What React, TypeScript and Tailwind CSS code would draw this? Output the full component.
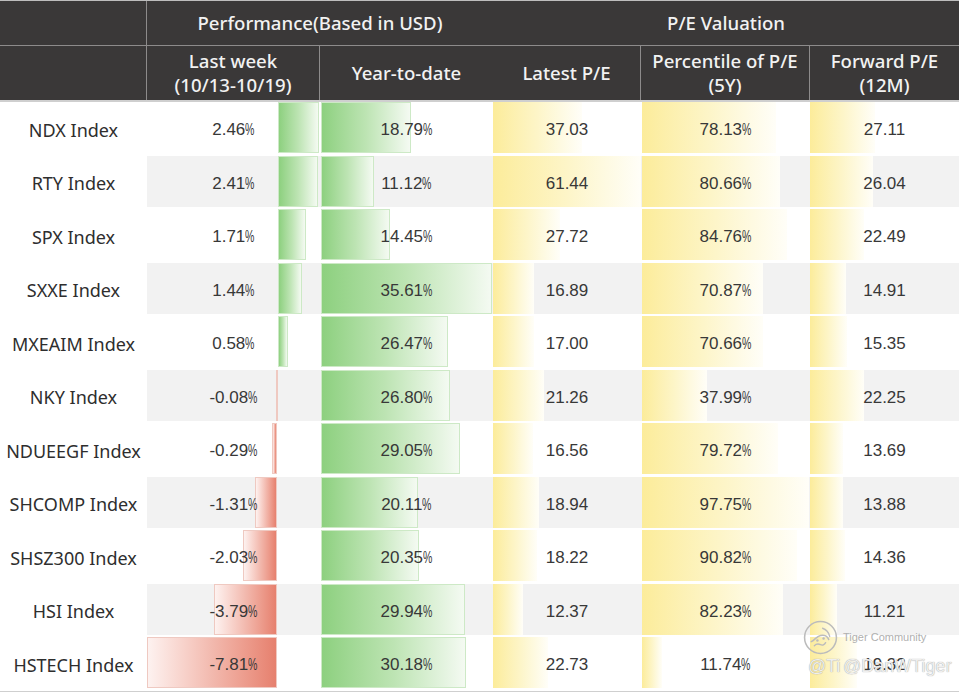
import React from 'react';

interface Row {
  name: string;
  lw: number;
  ytd: number;
  pe: number;
  pct: number;
  fwd: number;
}

const rows: Row[] = [
  { name: 'NDX Index', lw: 2.46, ytd: 18.79, pe: 37.03, pct: 78.13, fwd: 27.11 },
  { name: 'RTY Index', lw: 2.41, ytd: 11.12, pe: 61.44, pct: 80.66, fwd: 26.04 },
  { name: 'SPX Index', lw: 1.71, ytd: 14.45, pe: 27.72, pct: 84.76, fwd: 22.49 },
  { name: 'SXXE Index', lw: 1.44, ytd: 35.61, pe: 16.89, pct: 70.87, fwd: 14.91 },
  { name: 'MXEAIM Index', lw: 0.58, ytd: 26.47, pe: 17.0, pct: 70.66, fwd: 15.35 },
  { name: 'NKY Index', lw: -0.08, ytd: 26.8, pe: 21.26, pct: 37.99, fwd: 22.25 },
  { name: 'NDUEEGF Index', lw: -0.29, ytd: 29.05, pe: 16.56, pct: 79.72, fwd: 13.69 },
  { name: 'SHCOMP Index', lw: -1.31, ytd: 20.11, pe: 18.94, pct: 97.75, fwd: 13.88 },
  { name: 'SHSZ300 Index', lw: -2.03, ytd: 20.35, pe: 18.22, pct: 90.82, fwd: 14.36 },
  { name: 'HSI Index', lw: -3.79, ytd: 29.94, pe: 12.37, pct: 82.23, fwd: 11.21 },
  { name: 'HSTECH Index', lw: -7.81, ytd: 30.18, pe: 22.73, pct: 11.74, fwd: 19.32 },
];

// px per unit, read off the bars in the sheet
const LW_AXIS = 130;
const LW_SCALE = 16.6;
const YTD_SCALE = 4.8;
const PE_SCALE = 2.41;
const PCT_SCALE = 1.71;

const Pct = () => (
  <span className="inline-block origin-left scale-x-[0.62] -mr-[5.7px]">%</span>
);

const Num: React.FC<{ v: string; pct?: boolean }> = ({ v, pct }) => (
  <span className="relative pt-[5px] font-['Liberation_Sans',sans-serif] text-[17px] text-[#383838]">
    {v}
    {pct && <Pct />}
  </span>
);

type BarKind = 'green' | 'red' | 'yellow';

const barClass: Record<BarKind, string> = {
  green: 'bg-linear-to-r from-[#8dd07f] via-[#bde4b3] to-[#f4faf2] border border-[#cde9c6]',
  red: 'bg-linear-to-l from-[#e6806e] via-[#f2b9ae] to-[#fdf2f0] border border-[#efc9c1]',
  yellow: 'bg-linear-to-r from-[#fcec9a] via-[#fdf5c8] to-[#fffef8]',
};

const Cell: React.FC<{
  width: string;
  gray: boolean;
  left: number;
  barWidth: number;
  kind: BarKind;
  children: React.ReactNode;
}> = ({ width, gray, left, barWidth, kind, children }) => (
  <div
    className={`relative flex h-full items-center justify-center ${width} ${
      gray ? 'bg-[#f2f2f2]' : 'bg-white'
    }`}
  >
    <div
      className={`absolute top-0 bottom-0 ${barClass[kind]}`}
      style={{ left, width: Math.max(barWidth, 1) }}
    />
    {children}
  </div>
);

const TigerMark = () => (
  <div className="pointer-events-none absolute left-[802px] top-[619px] flex flex-col">
    <div className="flex items-center gap-[4px]">
      <svg width="37" height="37" viewBox="0 0 36 36" fill="none">
        <circle cx="18" cy="18" r="15.5" stroke="#bcbcbc" strokeWidth="1.5" />
        <path d="M9 22c3-1 5-5 9-6s7 1 8 4" stroke="#bcbcbc" strokeWidth="1.5" strokeLinecap="round" />
        <path d="M12 26c2-2 4-2 6-1s4 0 5-2" stroke="#bcbcbc" strokeWidth="1.3" strokeLinecap="round" />
        <path d="M20 9c3 1 6 4 7 8" stroke="#bcbcbc" strokeWidth="1.3" strokeLinecap="round" />
        <circle cx="15" cy="21" r="1.2" fill="#bcbcbc" />
        <circle cx="21" cy="19" r="1.2" fill="#bcbcbc" />
      </svg>
      <span className="font-['Liberation_Sans',sans-serif] text-[11px] text-[#b0b0b0]">Tiger Community</span>
    </div>
    <div className="relative -mt-[3px] h-[24px] w-[150px] font-['Liberation_Sans',sans-serif] text-[18px] text-[#efefef] [text-shadow:0_0_1px_#8a8a8a]">
      <span className="absolute left-[6px] top-0">@Ti</span>
      <span className="absolute left-[41px] top-0">@DanWTiger</span>
    </div>
  </div>
);

const App: React.FC = () => {
  return (
    <div className="relative w-[959px] bg-white font-['Noto_Sans',sans-serif]">
      {/* header */}
      <div className="border-t border-[#bdbdbd] bg-[#3a3838] text-[18.6px] font-medium text-[#f2f2f2]">
        <div className="flex h-[45px] border-b border-[#8d8b8b]">
          <div className="w-[147px] border-r border-[#8d8b8b]" />
          <div className="flex w-[346px] items-center justify-center">Performance(Based in USD)</div>
          <div className="flex w-[466px] items-center justify-center">P/E Valuation</div>
        </div>
        <div className="flex h-[56px] border-b-2 border-[#cfcfcf] text-center leading-[24px]">
          <div className="w-[147px] border-r border-[#8d8b8b]" />
          <div className="flex w-[173px] flex-col items-center justify-center border-r border-[#8d8b8b]">
            <span>Last week</span>
            <span>(10/13-10/19)</span>
          </div>
          <div className="flex w-[173px] items-center justify-center">Year-to-date</div>
          <div className="flex w-[148px] items-center justify-center border-r border-[#8d8b8b]">Latest P/E</div>
          <div className="flex w-[169px] flex-col items-center justify-center border-r border-[#8d8b8b]">
            <span>Percentile of P/E</span>
            <span>(5Y)</span>
          </div>
          <div className="flex w-[149px] flex-col items-center justify-center">
            <span>Forward P/E</span>
            <span>(12M)</span>
          </div>
        </div>
      </div>

      {/* body */}
      <div className="border-b border-[#cfcfcf]">
        {rows.map((r, i) => {
          const gray = i % 2 === 1;
          const lwW = Math.abs(r.lw) * LW_SCALE;
          return (
            <div key={r.name} className="flex h-[53.5px] pb-[2.5px]">
              <div className="flex h-full w-[147px] items-center justify-center pt-[5px] text-[18px] text-[#2e2e2e]">
                {r.name}
              </div>
              <Cell
                width="w-[173px]"
                gray={gray}
                left={r.lw >= 0 ? LW_AXIS + 1 : LW_AXIS - lwW}
                barWidth={lwW}
                kind={r.lw >= 0 ? 'green' : 'red'}
              >
                <Num v={r.lw.toFixed(2)} pct />
              </Cell>
              <Cell width="w-[173px]" gray={gray} left={1} barWidth={r.ytd * YTD_SCALE} kind="green">
                <Num v={r.ytd.toFixed(2)} pct />
              </Cell>
              <Cell width="w-[148px]" gray={gray} left={0} barWidth={r.pe * PE_SCALE} kind="yellow">
                <Num v={r.pe.toFixed(2)} />
              </Cell>
              <Cell width="w-[169px]" gray={gray} left={1} barWidth={r.pct * PCT_SCALE} kind="yellow">
                <Num v={r.pct.toFixed(2)} pct />
              </Cell>
              <Cell width="w-[149px]" gray={gray} left={0} barWidth={r.fwd * PE_SCALE} kind="yellow">
                <Num v={r.fwd.toFixed(2)} />
              </Cell>
            </div>
          );
        })}
      </div>

      <TigerMark />
    </div>
  );
};

export default App;
